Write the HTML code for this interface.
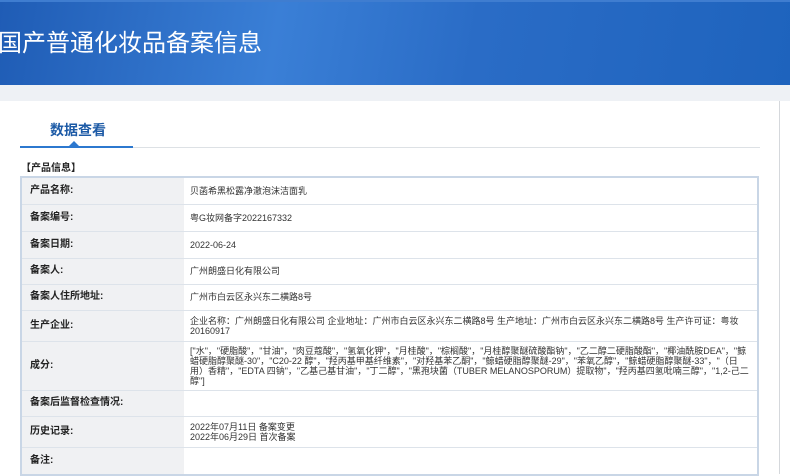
<!DOCTYPE html>
<html><head><meta charset="utf-8"><style>
*{margin:0;padding:0;box-sizing:border-box}
body{width:790px;height:474px;overflow:hidden;background:#fff;font-family:"Liberation Sans","Noto Sans CJK SC",sans-serif;position:relative}
.hd{position:absolute;left:0;top:0;width:790px;height:85px;background:linear-gradient(100deg,#1f5cb5 0%,#3a7fd6 35%,#2a6cc6 60%,#1e63bd 100%);border-top:2px solid #3f7dd0}
.hd h1{position:absolute;left:-2px;top:21px;color:#fff;font-size:24px;font-weight:normal}
.band{position:absolute;left:0;top:85px;width:790px;height:16px;background:#eef1f5}
.vl{position:absolute;left:779px;top:101px;width:1px;height:373px;background:#d5d8dc}
.tab{position:absolute;left:50px;top:120px;font-size:14px;font-weight:bold;color:#1c5aa6}
.ul{position:absolute;left:20px;top:146px;width:113px;height:2px;background:#2c78cf}
.gl{position:absolute;left:133px;top:147px;width:627px;height:1px;background:#dde1e5}
.tri{position:absolute;left:69px;top:141px;width:0;height:0;border-left:5px solid transparent;border-right:5px solid transparent;border-bottom:5px solid #2c78cf}
.sec{position:absolute;left:21px;top:163px;font-size:10px;font-weight:bold;color:#222;line-height:12px}
table{position:absolute;left:20px;top:176px;width:739px;border-collapse:collapse;border:2px solid #c9d6e6}
td{border-bottom:1px solid #dde3ea;font-size:9px;color:#333;vertical-align:middle;line-height:10px}
td.l{width:163px;background:#f0f1f3;padding-left:8px;font-size:10px;color:#222;font-weight:bold}
td.v{padding:0 6px}
</style></head><body>
<div class="hd"><h1>国产普通化妆品备案信息</h1></div>
<div class="band"></div>
<div class="vl"></div>
<div class="tab">数据查看</div>
<div class="ul"></div><div class="gl"></div><div class="tri"></div>
<div class="sec">【产品信息】</div>
<table>
<tr style="height:27px"><td class="l">产品名称:</td><td class="v">贝菡希黑松露净澈泡沫洁面乳</td></tr>
<tr style="height:27px"><td class="l">备案编号:</td><td class="v">粤G妆网备字2022167332</td></tr>
<tr style="height:27px"><td class="l">备案日期:</td><td class="v">2022-06-24</td></tr>
<tr style="height:26px"><td class="l">备案人:</td><td class="v">广州朗盛日化有限公司</td></tr>
<tr style="height:26px"><td class="l">备案人住所地址:</td><td class="v">广州市白云区永兴东二横路8号</td></tr>
<tr style="height:31px"><td class="l">生产企业:</td><td class="v">企业名称：广州朗盛日化有限公司 企业地址：广州市白云区永兴东二横路8号 生产地址：广州市白云区永兴东二横路8号 生产许可证：粤妆20160917</td></tr>
<tr style="height:49px"><td class="l">成分:</td><td class="v">["水"，"硬脂酸"，"甘油"，"肉豆蔻酸"，"氢氧化钾"，"月桂酸"，"棕榈酸"，"月桂醇聚醚硫酸酯钠"，"乙二醇二硬脂酸酯"，"椰油酰胺DEA"，"鲸蜡硬脂醇聚醚-30"，"C20-22 醇"，"羟丙基甲基纤维素"，"对羟基苯乙酮"，"鲸蜡硬脂醇聚醚-29"，"苯氧乙醇"，"鲸蜡硬脂醇聚醚-33"，"（日用）香精"，"EDTA 四钠"，"乙基己基甘油"，"丁二醇"，"黑孢块菌（TUBER MELANOSPORUM）提取物"，"羟丙基四氢吡喃三醇"，"1,2-己二醇"]</td></tr>
<tr style="height:26px"><td class="l">备案后监督检查情况:</td><td class="v"></td></tr>
<tr style="height:31px"><td class="l">历史记录:</td><td class="v">2022年07月11日 备案变更<br>2022年06月29日 首次备案</td></tr>
<tr style="height:28px"><td class="l">备注:</td><td class="v"></td></tr>
</table>
</body></html>
